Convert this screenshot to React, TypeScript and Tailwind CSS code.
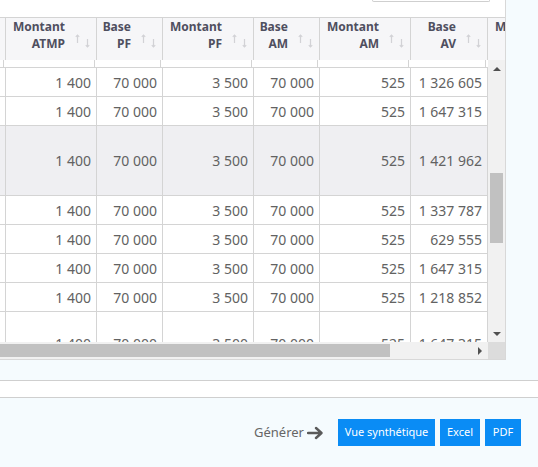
import React from 'react';

const widths = [4, 91, 66, 91, 66, 91, 77, 91];

const headers = [
  ['', ''],
  ['Montant', 'ATMP'],
  ['Base', 'PF'],
  ['Montant', 'PF'],
  ['Base', 'AM'],
  ['Montant', 'AM'],
  ['Base', 'AV'],
  ['Montant', 'AV'],
];

const avValues = ['1 326 605', '1 647 315', '1 421 962', '1 337 787', '629 555', '1 647 315', '1 218 852', '1 647 315'];

const rows = avValues.map((av, i) => ({
  cells: ['', '1 400', '70 000', '3 500', '70 000', '525', av, ''],
  height: i === 2 ? 'h-[70px]' : i === 7 ? 'h-[64px]' : 'h-[29px]',
  highlight: i === 2,
}));

function SortIcon() {
  return (
    <svg width="16" height="14" viewBox="0 0 16 14" className="shrink-0 mt-[16px] ml-[10px]">
      <g stroke="#d2d2d6" strokeWidth="1.2" fill="none">
        <path d="M2.5 1 V9" />
        <path d="M0.8 2.8 L2.5 1 L4.2 2.8" />
        <path d="M12.5 5 V13" />
        <path d="M10.8 11.2 L12.5 13 L14.2 11.2" />
      </g>
    </svg>
  );
}

function Triangle({ dir }: { dir: 'up' | 'down' | 'right' }) {
  const d = dir === 'up' ? 'M0 5 L4 1 L8 5 Z' : dir === 'down' ? 'M0 1 L8 1 L4 5 Z' : 'M1 0 L5 4 L1 8 Z';
  const size = dir === 'right' ? { w: 6, h: 8 } : { w: 8, h: 6 };
  return (
    <svg width={size.w} height={size.h} viewBox={`0 0 ${size.w} ${size.h}`}>
      <path d={d} fill="#505050" />
    </svg>
  );
}

export default function App() {
  return (
    <div
      className="w-[538px] h-[467px] overflow-hidden bg-[#f5fbfe]"
      style={{ fontFamily: '"Noto Sans", "Open Sans", sans-serif' }}
    >
      {/* Table panel */}
      <div className="w-[506px] bg-white border-r border-b border-[#d8d8d8]">
        <div className="h-[17px] flex">
          <div className="ml-[372px] w-[118px] h-[2px] border-x border-b border-[#cfcfcf] rounded-b-[3px]" />
        </div>

        {/* Header */}
        <div className="h-[43px] flex border-t border-[#d4d4d4] bg-[#f6f6f8] overflow-hidden">
          {headers.map((h, i) => (
            <div
              key={i}
              style={{ width: widths[i] }}
              className="shrink-0 h-full flex justify-end pr-[5px] border-r border-[#d4d4d4]"
            >
              {i > 0 && (
                <>
                  <div className="text-right text-[12px] leading-[17px] font-bold text-[#4f4f5f]">
                    <div>{h[0]}</div>
                    <div>{h[1]}</div>
                  </div>
                  <SortIcon />
                </>
              )}
            </div>
          ))}
        </div>

        {/* Body + vertical scrollbar */}
        <div className="flex h-[282px]">
          <div className="w-[488px] h-full overflow-hidden">
            <div className="mt-[-21px]">
              <div className="h-[29px] flex border-b border-[#d4d4d4]">
                {widths.map((w, i) => (
                  <div key={i} style={{ width: w }} className="shrink-0 border-r border-[#d4d4d4]" />
                ))}
              </div>
              {rows.map((r, ri) => (
                <div
                  key={ri}
                  className={`${r.height} flex border-b border-[#d4d4d4] ${r.highlight ? 'bg-[#efeff2]' : ''}`}
                >
                  {r.cells.map((c, i) => (
                    <div
                      key={i}
                      style={{ width: widths[i] }}
                      className="shrink-0 flex items-center justify-end pr-[5px] border-r border-[#d4d4d4] text-[14px] text-[#626262]"
                    >
                      {c}
                    </div>
                  ))}
                </div>
              ))}
            </div>
          </div>
          <div className="w-[17px] h-full bg-[#f1f1f1] flex flex-col">
            <div className="h-[17px] flex items-center justify-center">
              <Triangle dir="up" />
            </div>
            <div className="flex-1 px-[2px] pt-[96px]">
              <div className="h-[70px] bg-[#c1c1c1]" />
            </div>
            <div className="h-[17px] flex items-center justify-center">
              <Triangle dir="down" />
            </div>
          </div>
        </div>

        {/* Horizontal scrollbar */}
        <div className="flex h-[17px]">
          <div className="w-[488px] bg-[#f1f1f1] flex items-center">
            <div className="w-[390px] h-[13px] bg-[#c1c1c1]" />
            <div className="flex-1" />
            <div className="w-[17px] flex items-center justify-center">
              <Triangle dir="right" />
            </div>
          </div>
          <div className="w-[17px] bg-[#dcdcdc]" />
        </div>
      </div>

      <div className="h-[20px]" />
      <div className="h-[18px] bg-white border-y border-[#cfcfcf]" />

      {/* Footer */}
      <div className="flex items-center justify-end pt-[21px] pr-[17px]">
        <span className="text-[13px] text-[#666666]">Générer</span>
        <svg width="17" height="14" viewBox="0 0 17 14" className="ml-[3px] mr-[14px]">
          <path d="M1 7 H14 M9 2 L14.5 7 L9 12" stroke="#5a5a5a" strokeWidth="2.4" fill="none" strokeLinecap="round" strokeLinejoin="round" />
        </svg>
        <div className="flex gap-[5px]">
          <button className="h-[27px] w-[97px] bg-[#0a8cf5] text-white text-[11px]">Vue synthétique</button>
          <button className="h-[27px] w-[40px] bg-[#0a8cf5] text-white text-[11px]">Excel</button>
          <button className="h-[27px] w-[36px] bg-[#0a8cf5] text-white text-[11px]">PDF</button>
        </div>
      </div>
    </div>
  );
}
